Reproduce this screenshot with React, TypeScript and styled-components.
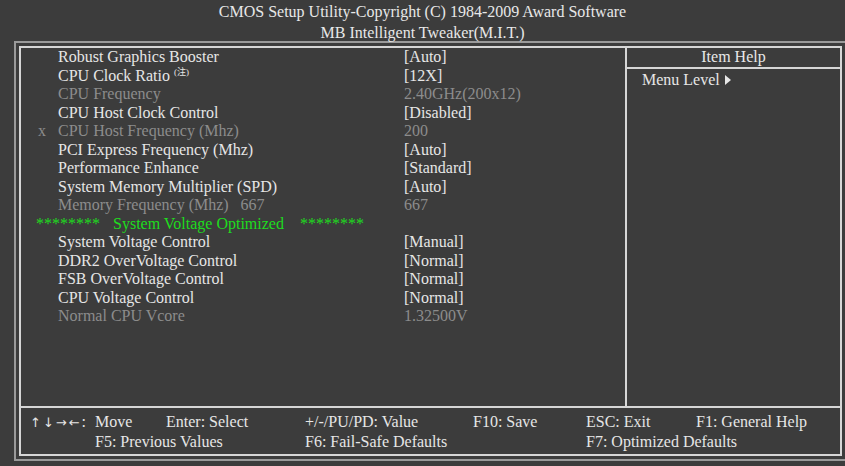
import React from 'react';
import styled, { createGlobalStyle } from 'styled-components';

const GlobalStyle = createGlobalStyle`
  html, body {
    margin: 0;
    padding: 0;
    background: #3c3c3c;
  }
  body {
    font-family: 'Liberation Serif', 'Times New Roman', serif;
    color: #e4e4e4;
  }
`;

type Tone = 'normal' | 'dim';

const Screen = styled.div`
  width: 845px;
  height: 466px;
  overflow: hidden;
  background: #3c3c3c;
`;

const Header = styled.header`
  height: 41px;
  box-sizing: border-box;
  padding-top: 2px;
  text-align: center;
  font-size: 16px;
  line-height: 20.5px;
  color: #e8e8e8;
`;

const OuterFrame = styled.div`
  margin-left: 14px;
  width: 850px;
  border: 2px solid #9a9a9a;
  border-right: none;
  padding: 3px 0 3px 3px;
`;

const InnerFrame = styled.div`
  width: 823px;
  height: 410px;
  box-sizing: border-box;
  border: 2px solid #d6d6d6;
  display: flex;
  flex-direction: column;
`;

const Main = styled.div`
  display: flex;
  height: 358px;
  border-bottom: 2px solid #d6d6d6;
`;

const Settings = styled.div`
  width: 604px;
  border-right: 2px solid #d6d6d6;
  font-size: 16px;
  line-height: 18.5px;
`;

const Row = styled.div<{ tone: Tone }>`
  display: grid;
  grid-template-columns: 20px 346px 1fr;
  padding-left: 17px;
  white-space: pre;
  color: ${(p) => (p.tone === 'dim' ? '#8c8c8c' : '#e6e6e6')};
`;

const Mark = styled.span`
  color: #8c8c8c;
`;

const Label = styled.span``;

const Value = styled.span``;

const Note = styled.sup`
  font-family: 'Liberation Serif', 'Noto Sans CJK SC', serif;
  font-size: 9px;
  vertical-align: 6px;
  line-height: 0;
`;

const Banner = styled.div`
  display: flex;
  align-items: baseline;
  padding-left: 15px;
  color: #1edc1e;
`;

const Stars = styled.span`
  font-size: 16px;
`;

const BannerText = styled.span`
  margin: 0 16px 0 13px;
`;

const Help = styled.div`
  flex: 1;
  font-size: 16px;
  line-height: 18.5px;
`;

const HelpTitle = styled.div`
  height: 19px;
  text-align: center;
  border-bottom: 2px solid #d6d6d6;
  color: #e8e8e8;
`;

const HelpBody = styled.div`
  padding: 2px 0 0 15px;
  color: #e6e6e6;
  display: flex;
  align-items: center;
  gap: 5px;
`;

const Arrow = styled.span`
  display: inline-block;
  width: 0;
  height: 0;
  border-left: 6px solid #e6e6e6;
  border-top: 5px solid transparent;
  border-bottom: 5px solid transparent;
`;

const Footer = styled.div`
  display: grid;
  grid-template-columns: 65px 71px 139px 168px 113px 110px 1fr;
  padding: 5px 0 0 9px;
  font-size: 16px;
  line-height: 18.5px;
  color: #e6e6e6;
  white-space: nowrap;
`;

const Keys = styled.span`
  font-family: 'DejaVu Sans', sans-serif;
  font-size: 13px;
  letter-spacing: 2px;
`;

const Span2 = styled.span`
  grid-column: span 2;
`;

interface Item {
  mark?: string;
  label: React.ReactNode;
  value: string;
  tone: Tone;
}

const items: Item[] = [
  { label: 'Robust Graphics Booster', value: '[Auto]', tone: 'normal' },
  { label: <>CPU Clock Ratio <Note>(注)</Note></>, value: '[12X]', tone: 'normal' },
  { label: 'CPU Frequency', value: '2.40GHz(200x12)', tone: 'dim' },
  { label: 'CPU Host Clock Control', value: '[Disabled]', tone: 'normal' },
  { mark: 'x', label: 'CPU Host Frequency (Mhz)', value: '200', tone: 'dim' },
  { label: 'PCI Express Frequency (Mhz)', value: '[Auto]', tone: 'normal' },
  { label: 'Performance Enhance', value: '[Standard]', tone: 'normal' },
  { label: 'System Memory Multiplier (SPD)', value: '[Auto]', tone: 'normal' },
  { label: 'Memory Frequency (Mhz)   667', value: '667', tone: 'dim' },
];

const voltageItems: Item[] = [
  { label: 'System Voltage Control', value: '[Manual]', tone: 'normal' },
  { label: 'DDR2 OverVoltage Control', value: '[Normal]', tone: 'normal' },
  { label: 'FSB OverVoltage Control', value: '[Normal]', tone: 'normal' },
  { label: 'CPU Voltage Control', value: '[Normal]', tone: 'normal' },
  { label: 'Normal CPU Vcore', value: '1.32500V', tone: 'dim' },
];

const SettingRow = ({ item }: { item: Item }) => (
  <Row tone={item.tone}>
    <Mark>{item.mark}</Mark>
    <Label>{item.label}</Label>
    <Value>{item.value}</Value>
  </Row>
);

const App = () => (
  <Screen>
    <GlobalStyle />
    <Header>
      <div>CMOS Setup Utility-Copyright (C) 1984-2009 Award Software</div>
      <div>MB Intelligent Tweaker(M.I.T.)</div>
    </Header>
    <OuterFrame>
      <InnerFrame>
        <Main>
          <Settings>
            {items.map((item, i) => (
              <SettingRow key={i} item={item} />
            ))}
            <Banner>
              <Stars>********</Stars>
              <BannerText>System Voltage Optimized</BannerText>
              <Stars>********</Stars>
            </Banner>
            {voltageItems.map((item, i) => (
              <SettingRow key={i} item={item} />
            ))}
          </Settings>
          <Help>
            <HelpTitle>Item Help</HelpTitle>
            <HelpBody>
              Menu Level <Arrow />
            </HelpBody>
          </Help>
        </Main>
        <Footer>
          <span>
            <Keys>↑↓→←</Keys>:
          </span>
          <span>Move</span>
          <span>Enter: Select</span>
          <span>+/-/PU/PD: Value</span>
          <span>F10: Save</span>
          <span>ESC: Exit</span>
          <span>F1: General Help</span>
          <span />
          <Span2>F5: Previous Values</Span2>
          <span>F6: Fail-Safe Defaults</span>
          <span />
          <Span2>F7: Optimized Defaults</Span2>
        </Footer>
      </InnerFrame>
    </OuterFrame>
  </Screen>
);

export default App;
